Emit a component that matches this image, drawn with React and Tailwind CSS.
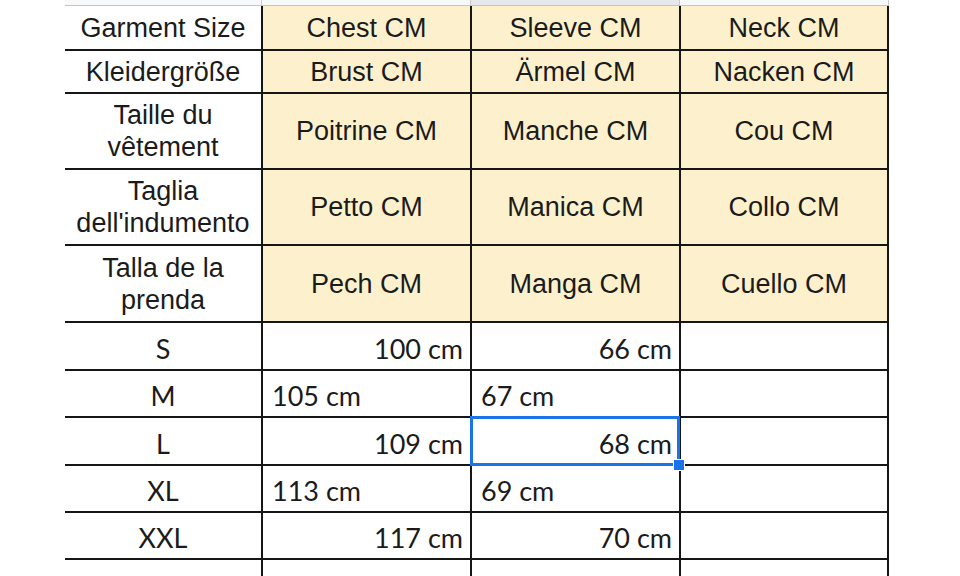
import React from 'react';

const headerRows = [
  { h: 'h-[45px]', cells: ['Garment Size', 'Chest CM', 'Sleeve CM', 'Neck CM'] },
  { h: 'h-[43px]', cells: ['Kleidergröße', 'Brust CM', 'Ärmel CM', 'Nacken CM'] },
  { h: 'h-[76px]', cells: ['Taille du vêtement', 'Poitrine CM', 'Manche CM', 'Cou CM'] },
  { h: 'h-[76px]', cells: ['Taglia dell\'indumento', 'Petto CM', 'Manica CM', 'Collo CM'] },
  { h: 'h-[77px]', cells: ['Talla de la prenda', 'Pech CM', 'Manga CM', 'Cuello CM'] },
];

// align: 'r' = numero a la derecha, 'l' = texto a la izquierda
const dataRows = [
  { h: 'h-[48px]', size: 'S', chest: '100 cm', sleeve: '66 cm', align: 'r' },
  { h: 'h-[47px]', size: 'M', chest: '105 cm', sleeve: '67 cm', align: 'l' },
  { h: 'h-[48px]', size: 'L', chest: '109 cm', sleeve: '68 cm', align: 'r', selected: true },
  { h: 'h-[47px]', size: 'XL', chest: '113 cm', sleeve: '69 cm', align: 'l' },
  { h: 'h-[47px]', size: 'XXL', chest: '117 cm', sleeve: '70 cm', align: 'r' },
  { h: 'h-[47px]', size: '', chest: '', sleeve: '', align: 'r' },
];

const colW = ['w-[196px]', 'w-[209px] border-l-2', 'w-[209px] border-l-2', 'w-[210px] border-l-2 border-r-2'];

const HeaderCell = ({ text, i }) => (
  <div
    className={`${colW[i]} border-[#161616] h-full flex items-center justify-center text-center px-2 leading-[32px] ${i > 0 ? 'bg-[#fdf1cd]' : 'bg-white'}`}
  >
    {text}
  </div>
);

const DataCell = ({ text, i, align, selected, center }) => (
  <div
    className={`${colW[i]} border-[#161616] h-full flex items-end pb-[4px] relative ${center ? 'justify-center' : align === 'r' ? 'justify-end pr-[7px]' : 'justify-start pl-[9px]'}`}
  >
    {text}
    {selected && (
      <>
        <div className="absolute z-10 -left-[2px] -top-[2px] -right-[1px] -bottom-[2px] border-[3px] border-[#1a73e8] pointer-events-none" />
        <div className="absolute z-20 -right-[6px] -bottom-[7px] w-[12px] h-[12px] bg-[#1a73e8] border border-white" />
      </>
    )}
  </div>
);

export default function App() {
  return (
    <div className="w-[960px] h-[576px] overflow-hidden bg-white text-[#1b1b1b]">
      <div className="pl-[65px] w-[889px] box-content">
        {/* franja de encabezados de columna */}
        <div className="flex h-[6px] border-b border-[#c4c4c4] w-[824px]">
          <div className="w-[197px] bg-[#f8f9fa] border-r border-[#c9c9c9]" />
          <div className="w-[209px] bg-[#f8f9fa] border-r border-[#c9c9c9]" />
          <div className="w-[209px] bg-[#e6e8eb] border-r border-[#c9c9c9]" />
          <div className="w-[209px] bg-[#f8f9fa] border-r border-[#c9c9c9]" />
        </div>

        <div className="font-['Liberation_Sans',Arial,sans-serif] text-[27px]">
          {headerRows.map((row, r) => (
            <div key={r} className={`flex ${row.h} border-b-2 border-[#161616] w-[824px]`}>
              {row.cells.map((c, i) => (
                <HeaderCell key={i} text={c} i={i} />
              ))}
            </div>
          ))}
        </div>

        <div className="font-['Lato','Open_Sans',sans-serif] text-[27px] leading-[32px]">
          {dataRows.map((row, r) => (
            <div key={r} className={`flex ${row.h} border-b-2 border-[#161616] w-[824px]`}>
              <DataCell text={row.size} i={0} center />
              <DataCell text={row.chest} i={1} align={row.align} />
              <DataCell text={row.sleeve} i={2} align={row.align} selected={row.selected} />
              <DataCell text="" i={3} />
            </div>
          ))}
        </div>
      </div>
    </div>
  );
}
